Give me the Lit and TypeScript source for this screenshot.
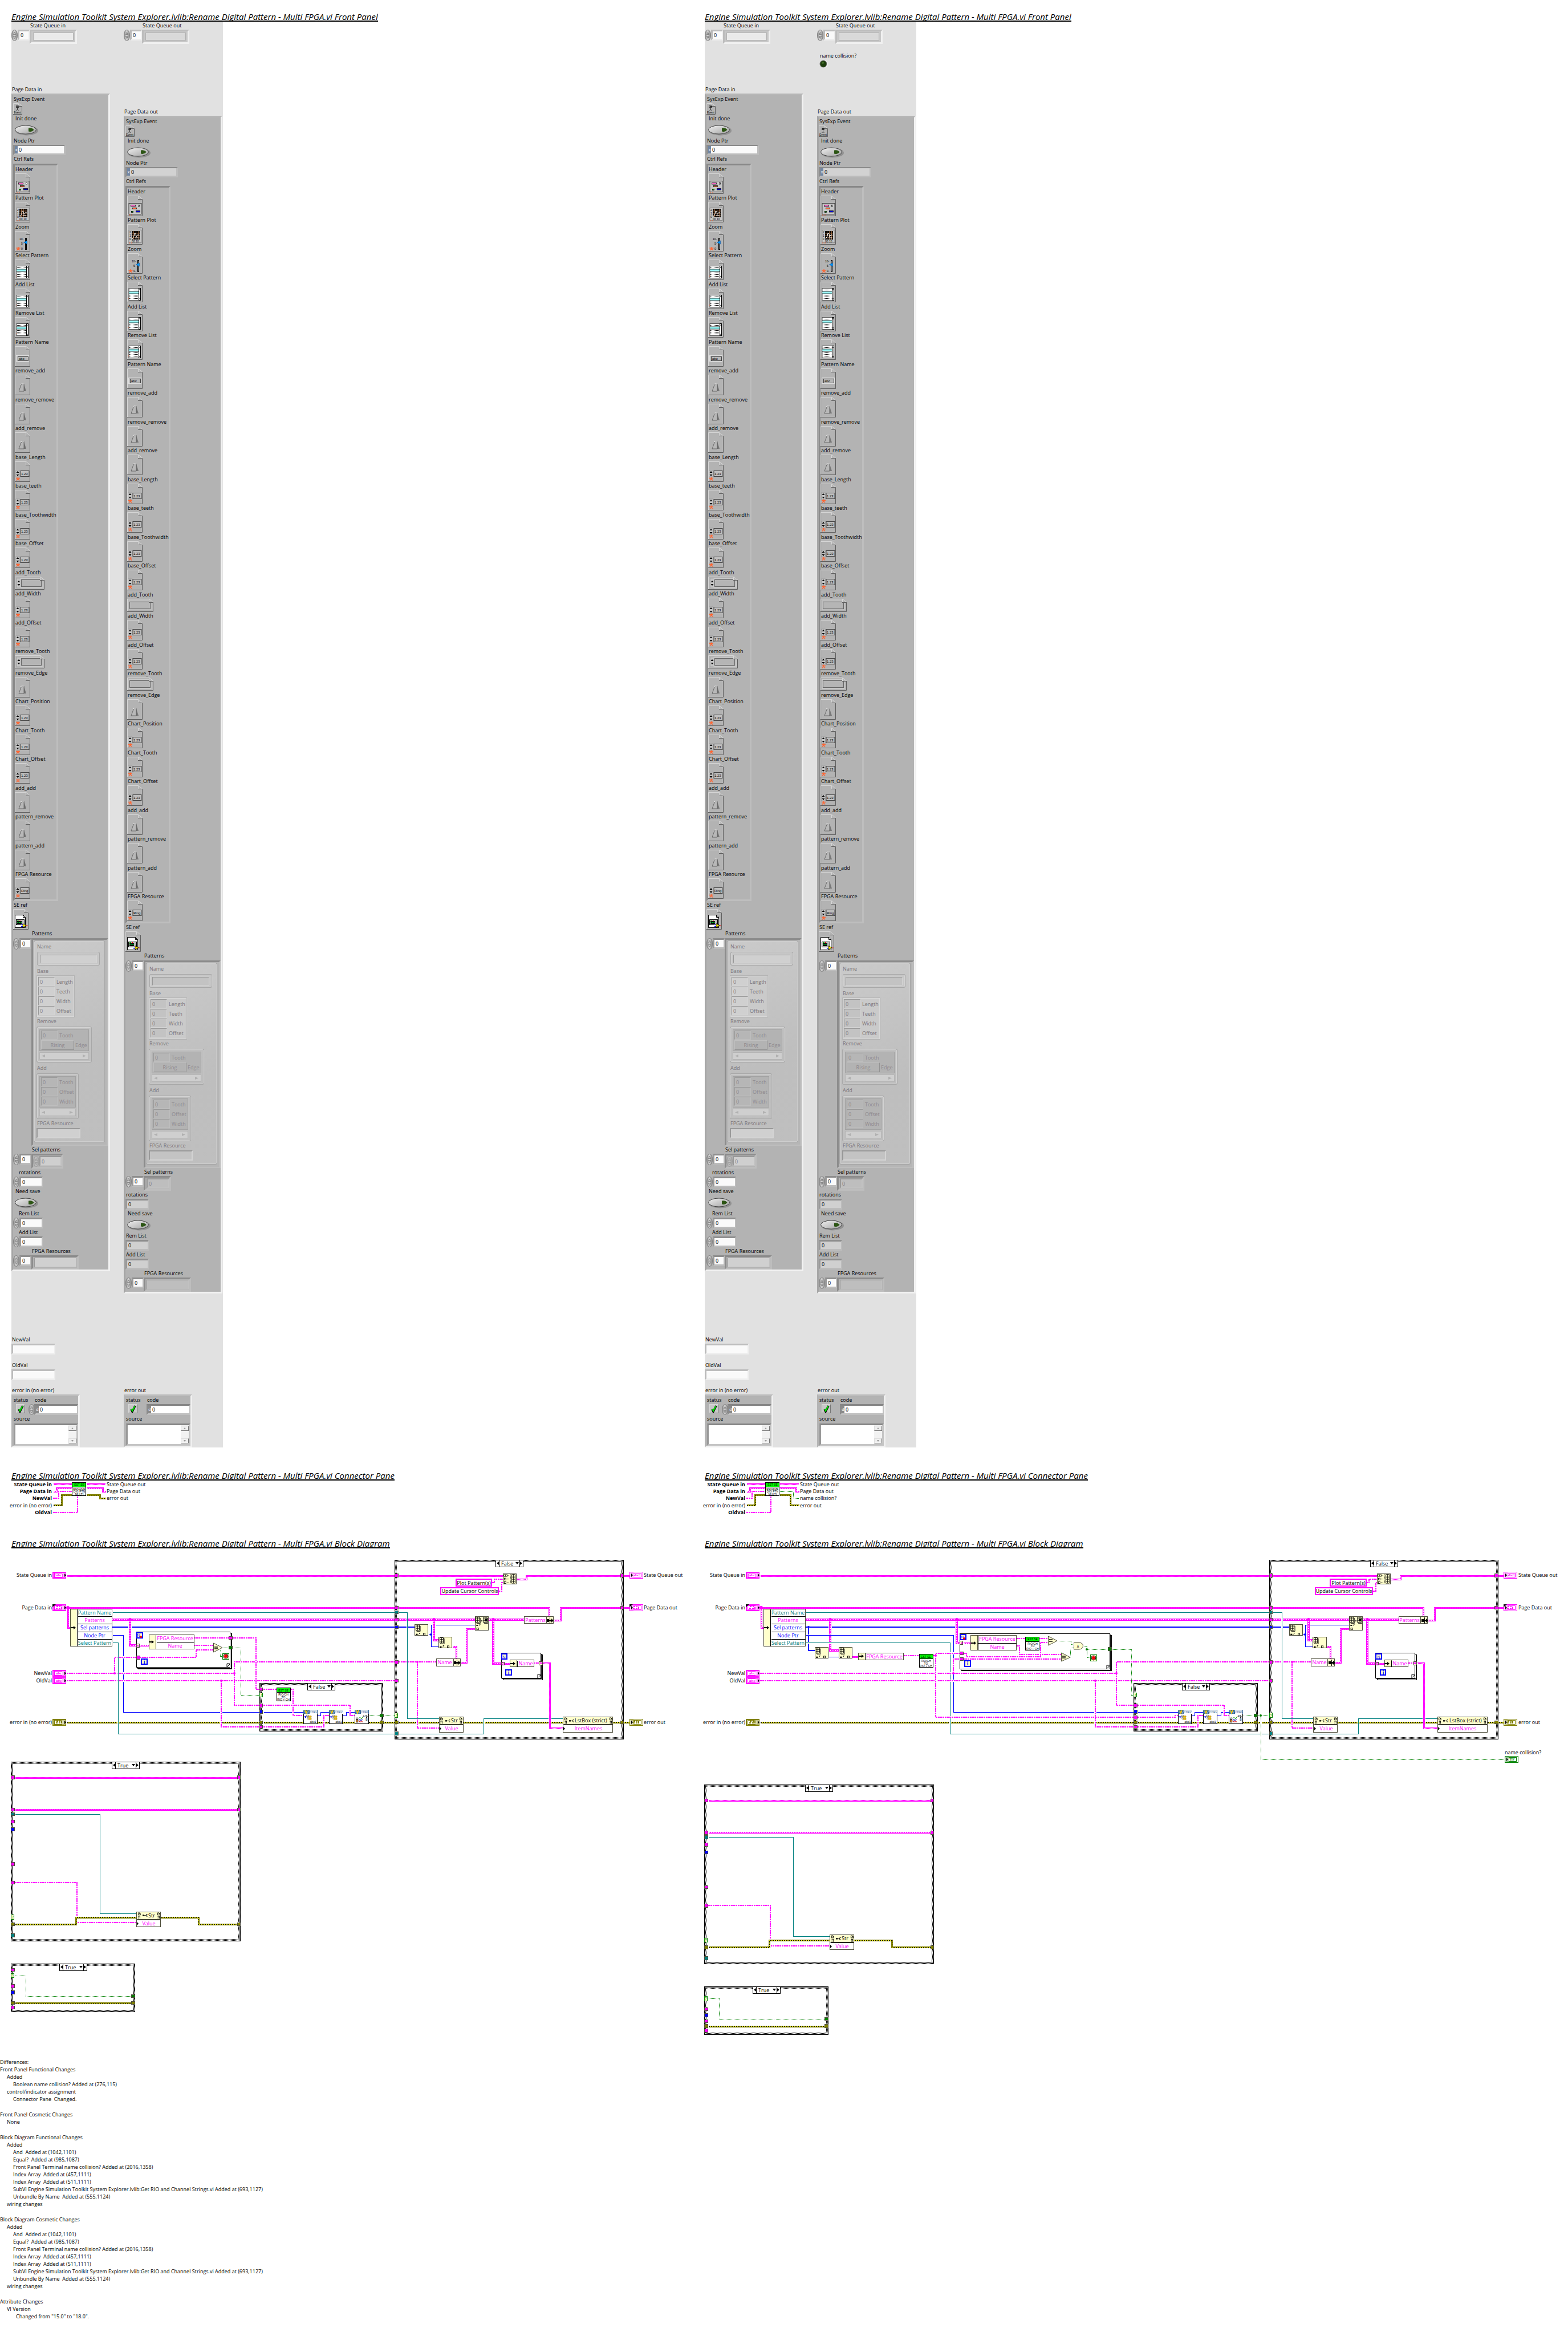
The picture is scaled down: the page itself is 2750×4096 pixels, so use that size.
import { LitElement, html, svg, css, nothing } from "lit";
import { customElement, property } from "lit/decorators.js";

/* ---------- shared drawing helpers ---------- */

// Diagram units are LabVIEW pixels; K brings them to CSS pixels.
const K = 0.776;
const q = (n: number) => Math.round(n * K);

const PINK = "#ff00ff";
const BLUE = "#0000ff";
const TEAL = "#008080";
const OLIVE = "#808000";
const GREEN = "#008000";
const CREAM = "#ffffcc";
const EDGE = "#4d4d3a";

type Kind = "str" | "strArr" | "clu" | "cluArr" | "err" | "blue" | "blueArr" | "teal" | "bool";

const WIRES: Record<Kind, { w: number; c: string; ow?: number; o?: string; d?: string; bd?: string; u?: string }> = {
  str: { w: 2, c: PINK, bd: "3 1" },
  strArr: { w: 3, c: PINK, ow: 1, o: "#ffffff", d: "1 1" },
  clu: { w: 3, c: PINK, ow: 1, o: "#ffffff", d: "2 2" },
  cluArr: { w: 4, c: PINK, ow: 2, o: "#ffffff", d: "1 2" },
  err: { w: 3, c: OLIVE, ow: 1, o: "#000000", d: "2 2", u: "#e8e800" },
  blue: { w: 1, c: BLUE },
  blueArr: { w: 2, c: BLUE },
  teal: { w: 1, c: TEAL },
  bool: { w: 1, c: GREEN, bd: "1 1" },
};

// Points alternate x, y in diagram units.
const wire = (kind: Kind, ...p: number[]) => {
  const s = WIRES[kind];
  const odd = s.w % 2 ? 0.5 : 0;
  let d = "";
  for (let i = 0; i < p.length; i += 2) d += `${i ? "L" : "M"}${q(p[i]) + odd} ${q(p[i + 1]) + odd}`;
  return svg`<g fill="none" shape-rendering="crispEdges">
    <path d=${d} stroke="#fff" stroke-width=${s.w + 2}></path>
    <path d=${d} stroke=${s.c} stroke-width=${s.w} stroke-linejoin="miter" stroke-dasharray=${s.bd ?? "none"}></path>
    ${s.u ? svg`<path d=${d} stroke=${s.u} stroke-width="1"></path>` : nothing}
    ${s.o ? svg`<path d=${d} stroke=${s.o} stroke-width=${s.ow ?? 1} stroke-dasharray=${s.d ?? "none"}></path>` : nothing}
  </g>`;
};

const dot = (x: number, y: number, c = PINK, r = 2) =>
  svg`<circle cx=${q(x)} cy=${q(y)} r=${r} fill=${c}></circle>`;

const box = (x1: number, y1: number, x2: number, y2: number, fill = CREAM, stroke = EDGE, t = 1) => {
  const x = q(x1), y = q(y1), w = q(x2) - x, h = q(y2) - y;
  return svg`<rect x=${x} y=${y} width=${w} height=${h} fill=${stroke}></rect>
    <rect x=${x + t} y=${y + t} width=${w - 2 * t} height=${h - 2 * t} fill=${fill}></rect>`;
};

const line = (x1: number, y1: number, x2: number, y2: number, c = "#000") =>
  svg`<path d=${`M${q(x1) + 0.5} ${q(y1) + 0.5}L${q(x2) + 0.5} ${q(y2) + 0.5}`} stroke=${c} shape-rendering="crispEdges"></path>`;

// y is the middle of the line of text.
const text = (x: number, y: number, s: string, fill = "#000", anchor = "start", cls = "t9") =>
  svg`<text class=${cls} x=${q(x)} y=${q(y) + (cls === "t5" ? 2 : 3)} fill=${fill} text-anchor=${anchor}>${s}</text>`;

const tunnel = (x: number, y: number, c: string) => box(x, y - 4.2, x + 8.4, y + 4.2, c, EDGE);
const autoTunnel = (x: number, y: number) => svg`${box(x, y - 4.2, x + 8, y + 4.2, CREAM, EDGE)}
  ${box(x + 2, y - 2, x + 6, y + 2, CREAM, PINK)}`;
const askTunnel = (x: number, y: number) => svg`${box(x, y - 5.5, x + 7.5, y + 5.5, CREAM, GREEN)}
  ${text(x + 4, y, "?", GREEN, "middle", "t7")}`;

const art = (x: number, y: number, body: unknown) =>
  svg`<g transform=${`translate(${q(x)} ${q(y)}) scale(${K})`}>${body}</g>`;

const caseFrame = (x1: number, y1: number, x2: number, y2: number, sel: number, name: string) => {
  const x = q(x1), y = q(y1), w = q(x2) - x, h = q(y2) - y, sx = q(sel), sy = y;
  return svg`<rect x=${x} y=${y} width=${w} height=${h} fill="#000"></rect>
    <rect x=${x + 1} y=${y + 1} width=${w - 2} height=${h - 2} fill="url(#hatch)"></rect>
    <rect x=${x + 4} y=${y + 4} width=${w - 8} height=${h - 8} fill="#fff"></rect>
    <rect x=${sx} y=${sy} width="49" height="13" fill="#000"></rect>
    <rect x=${sx + 1} y=${sy + 1} width="5" height="11" fill="#fff"></rect>
    <rect x=${sx + 7} y=${sy + 1} width="35" height="11" fill="#fff"></rect>
    <rect x=${sx + 43} y=${sy + 1} width="5" height="11" fill="#fff"></rect>
    <path d=${`M${sx + 6} ${sy + 3}v6l-4 -3zM${sx + 43} ${sy + 3}v6l4 -3zM${sx + 35} ${sy + 4}h6l-3 4z`} fill="#000"></path>
    <text class="t9" x=${sx + 10} y=${sy + 10}>${name}</text>`;
};

const forLoop = (x1: number, y1: number, x2: number, y2: number, ix: number, iy: number, stop = false) => {
  const corner = `M${q(x2) - 6} ${q(y2) - 1}v-6h6zM${q(x2) - 6} ${q(y2) - 1}l6 -6`;
  return svg`${box(x1 + 4, y1 + 4, x2 + 4, y2 + 4, "#fff", "#000")}${box(x1 + 2, y1 + 2, x2 + 2, y2 + 2, "#fff", "#000")}
    ${box(x1, y1, x2, y2, "#fff", "#000")}
    <path d=${corner} fill="#fff" stroke="#000" stroke-width="1"></path>
    ${box(x1, y1 + 1, x1 + 15, y1 + 15, CREAM, BLUE, 2)}
    ${text(x1 + (stop ? 5.5 : 7.5), y1 + 8, "N", BLUE, "middle", "t7")}
    ${stop ? svg`<circle cx=${q(x1 + 10.5)} cy=${q(y1 + 11)} r="2" fill="red"></circle>` : nothing}
    ${box(ix, iy, ix + 15, iy + 14.5, CREAM, BLUE, 2)}
    ${text(ix + 7.5, iy + 7.5, "i", BLUE, "middle", "t9 b")}`;
};

const arrow = (x: number, y: number) =>
  svg`<path d=${`M${q(x)} ${q(y) - 1}h5v-2l4 3l-4 3v-2h-5z`} fill="#000"></path>`;

const unbundle = (x1: number, y1: number, x2: number, rows: [string, string][]) => {
  const y2 = y1 + rows.length * 17.1;
  return svg`${box(x1, y1, x2, y2, "#fff")}
    ${box(x1, y1, x1 + 17, y2)}
    ${rows.map(([n, c], i) => svg`${i ? line(x1 + 17, y1 + i * 17.1, x2 - 1.5, y1 + i * 17.1) : nothing}
      ${text((x1 + 16 + x2) / 2, y1 + i * 17.1 + 9, n, c, "middle")}`)}
    ${line(x1 + 16, y1 + 1, x1 + 16, y2 - 2)}
    ${arrow(x1 + 1, (y1 + y2) / 2)}`;
};

const bundle = (x1: number, y1: number, x2: number, name: string) => svg`${box(x1, y1, x2, y1 + 17, "#fff")}
  ${box(x2 - 17, y1, x2, y1 + 17)}
  ${text((x1 + x2 - 16) / 2, y1 + 9, name, PINK, "middle")}
  ${line(x2 - 8.5, y1 + 1, x2 - 8.5, y1 + 15)}
  <path d=${`M${q(x2 - 15)} ${q(y1 + 9) - 2}h4v1h4v-2l4 3.5l-4 3.5v-2h-4v1h-4z`} fill="#000"></path>`;

const GRID = "M0 0H8V12H0ZM4 0V12M0 4H8M0 8H8M8 2h2v12h-8v-2";

const indexArray = (x: number, y: number) => svg`${box(x, y, x + 31, y + 26.4)}
  ${art(x, y, svg`<g fill="none" stroke="#000" stroke-width="1.1"><path transform="translate(3 2)" d=${GRID}></path>
    <path d="M3 23h4" stroke-width="3"></path><path d="M9 23h1M11 22v-2M10 20h3" ></path>
    <rect x="20" y="20.5" width="4" height="4"></rect></g>`)}`;

const replaceArray = (x: number, y: number) => svg`${box(x, y, x + 31, y + 32.4)}
  ${art(x, y, svg`<g fill="none" stroke="#000" stroke-width="1.1"><path transform="translate(2 2)" d=${GRID}></path>
    <path transform="translate(19 2)" d=${GRID}></path><path d="M23 6h4v4h-4z" fill="#000"></path>
    <path d="M14 10.5h3M3 21h4" stroke-width="2"></path><path d="M9 21h1M11 20v-2h2"></path>
    <rect x="4" y="26.5" width="4" height="4"></rect></g>`)}`;

const buildArray = (x: number, y: number) => svg`${box(x, y, x + 31, y + 24.4)}
  ${art(x, y, svg`<g fill="none" stroke="#000" stroke-width="1.1"><path d="M2 2.5h8v4h-8zM6 2.5v4"></path>
    <rect x="3" y="10.5" width="4" height="4"></rect><rect x="3" y="18.5" width="4" height="4"></rect>
    <path d="M11 4.500h3M9 12.500h5M9 20.500h5" stroke-dasharray="1 1"></path>
    <path d="M17.500 2v21" stroke-dasharray="2 1"></path>
    <path d="M20 2h8v20h-8zM24 2v20M20 6h8M20 10h8M20 14h8M20 18h8"></path></g>`)}`;

const subVi = (x: number, y: number, lines: string[]) => svg`${box(x, y, x + 32, y + 31.6, "#fff", "#000")}
  ${box(x, y, x + 32, y + 11.6, "#00ff00", "#000")}
  ${text(x + 16, y + 6, "EST SE", "#000", "middle", "t5")}
  ${lines.map((l, i) => text(x + 16, y + 15.5 + i * 6, l, "#000", "middle", "t5"))}`;

const cdev = (x: number, y: number, compare = false) => svg`${box(x, y, x + 32, y + 31.4, "#fff", "#000")}
  ${box(x, y, x + 32, y + 9, "#336699", "#336699")}
  ${box(x + 14, y + 1, x + 31, y + 8, "#fff", "#fff")}
  ${text(x + 23, y + 4.500, "CDEV", "#336699", "middle", "t5")}
  ${art(x, y, svg`<path d="M1 1l4 7l3-5l2 5l3-7" stroke="#7fa6cc" fill="none" stroke-width="1.5"></path>
    <path d="M4 1l2.500 7l2.500-7" stroke="#ffcc00" fill="none" stroke-width="2"></path>
    ${compare
      ? svg`<g fill="none" stroke-width="1.200"><circle cx="5.500" cy="20" r="2" stroke="#000"></circle><path d="M3.500 22h4v6h-4z" fill="#ff9933" stroke="#000"></path>
        <path d="M10 19q2-4 4 0t4-3" stroke="#009900"></path><path d="M10 25v-3h3v3h3v-3h2" stroke="#0000cc"></path><path d="M10 28l2-3l2 3l2-3l2 3" stroke="#dd0000"></path>
        <path d="M24 13h3v4m-2-2l2 3l2-3" stroke="#000"></path></g>`
      : svg`<g fill="none" stroke="#666"><path d="M1 16h5M4 14l2 2l-2 2" stroke="#0000ff" stroke-width="1.500"></path>
        <path d="M7 12h5v3h-5zM9 15v6h3M9 17h3"></path><path d="M12 14h6v3h-6zM12 19h6v3h-6z" fill="#ffcc00" stroke="#aa8800"></path></g>`}`)}
  ${compare
    ? svg`${text(x + 21, y + 14, "A", "#000", "middle", "t5")}${text(x + 27, y + 21, "B", "#000", "middle", "t5")}`
    : text(x + 22, y + 26.500, "abc1", "#000", "middle", "t5")}`;

const equal = (x: number, y: number) => svg`
  <path d=${`M${q(x) + 0.5} ${q(y)}L${q(x + 20)} ${q(y + 10.2)}L${q(x) + 0.5} ${q(y + 20.4)}Z`} fill=${CREAM} stroke=${EDGE}></path>
  <path d=${`M${q(x + 2)} ${q(y + 8.500)}h6M${q(x + 2)} ${q(y + 12)}h6`} stroke=${EDGE} stroke-width="2" shape-rendering="crispEdges"></path>`;

const andGate = (x: number, y: number) => svg`
  <path d=${`M${q(x) + 0.5} ${q(y)}h9a7 6 0 0 1 0 12h-9z`} fill=${CREAM} stroke=${EDGE}></path>
  ${text(x + 10, y + 8, "∧", "#000", "middle", "t7")}`;

const stopSign = (x: number, y: number) => svg`${box(x, y, x + 15.500, y + 15, CREAM, GREEN)}
  <circle cx=${q(x + 7.700)} cy=${q(y + 7.500)} r="4" fill="#fff" stroke="#000"></circle>
  <circle cx=${q(x + 7.700)} cy=${q(y + 7.500)} r="3" fill="red"></circle>`;

const property_ = (x: number, y: number, x2: number, name: string, item: string) => svg`${box(x, y, x2, y + 35.300, "#fff")}
  ${box(x, y, x2, y + 18.500)}
  ${line(x + 1.500, y + 18, x2 - 2, y + 18)}
  ${[x + 3, x2 - 8].map((px) => art(px, y, svg`<path d="M0.500 2.500h3l2 2v3h-5zM3.500 2.500v2h2" fill="none" stroke="#000" stroke-width="1.100"></path>
    <path d="M0.500 10.500h2v2h-1v1M1.500 15v1.500M4.500 10v4M4.500 15v1.500" fill="none" stroke="#000" stroke-width="1.200"></path>`))}
  ${art(x + 13.500, y + 6, svg`<path d="M0 1.500h4v1h4v-1.500l2-1h1v1.500h-2v3h2v1.500h-1l-2-1v-1.500h-4v1h-4z" fill="#000"></path>`)}
  ${text(x + 27, y + 9, name)}
  <path d=${`M${q(x + 1.500)} ${q(y + 23)}v6l3-3z`} fill="#000"></path>
  ${text((x + x2) / 2 + 1, y + 27, item, PINK, "middle")}`;

const terminal = (x: number, y: number, c: string, glyph: string, out = false, typedef = false) => {
  const X = q(x), Y = q(y), t = out ? 1 : 2;
  const soft = c === PINK ? "#ffb3ff" : c === OLIVE ? "#cfcf9f" : "#a8d0a8";
  return svg`<rect x=${X} y=${Y} width="24" height="12" fill=${c}></rect>
    <rect x=${X + t} y=${Y + t} width=${24 - 2 * t} height=${12 - 2 * t} fill="#fff"></rect>
    <rect x=${X + 3.500} y=${Y + 2.500} width="17" height="7" fill="none" stroke=${c}></rect>
    <rect x=${out ? X + 1 : X + 17} y=${Y + t} width="6" height=${12 - 2 * t} fill=${soft} opacity="0.8"></rect>
    ${glyph
      ? svg`<text class="t7 m" x=${X + (out ? 13 : 11)} y=${Y + 8} fill=${c} text-anchor="middle">${glyph}</text>`
      : svg`<path d=${`M${X + 7} ${Y + 4}h3M${X + 6} ${Y + 7}h3M${X + 11} ${Y + 7}h3M${X + 12} ${Y + 4}h2M${X + 16} ${Y + 4}v4`} stroke=${c} stroke-width="2" fill="none"></path>`}
    <path d=${out ? `M${X + 3} ${Y + 3}v6l3 -3z` : `M${X + 21} ${Y + 3}v6l3 -3z`} fill="#000"></path>
    ${typedef ? svg`<path d=${`M${X} ${Y}h6l-6 5z`} fill="#000"></path>` : nothing}`;
};

const svgText = css`
  :host { display: block; font-family: "Open Sans", "Noto Sans", sans-serif; }
  svg { display: block; overflow: visible; }
  .t9 { font-size: 9px; }
  .t7 { font-size: 7px; }
  .t5 { font-size: 5px; font-family: "Liberation Sans", sans-serif; }
  .b { font-weight: 700; }
  .m { font-family: "Liberation Serif", serif; font-weight: 700; }
`;

/* ---------- front panel ---------- */

const paper = (w: number, h: number, body: unknown, fold = 7) => html`<svg class="paper" width=${w} height=${h} viewBox=${`0 0 ${w} ${h}`} aria-hidden="true">
  <path d=${`M0.500 ${h}V0.500H${w - fold - 0.500}V${fold - 1}M${w - fold} 0.500L${w - 0.500} ${fold - 1}`} fill="none" stroke="#d6d6d6"></path>
  <path d=${`M0 ${h - 0.500}H${w - 0.500}V${fold - 0.500}H${w - fold - 1}`} fill="none" stroke="#5e5e5e"></path>
  ${body}</svg>`;

const star = (x: number, y: number) =>
  svg`<path d=${`M${x} ${y - 3}v3M${x - 3.500} ${y - 1}h7M${x} ${y}l-2.500 3M${x} ${y}l2.500 3`} stroke="#ff6633" stroke-width="1.300" fill="none"></path>`;

const spinArrows = (x: number, y: number, h: number) => svg`
  <rect x=${x} y=${y} width="7" height=${h} fill="#c4c4c4" stroke="#8a8a8a" stroke-width="0.500"></rect>
  <path d=${`M${x + 1} ${y + h / 2 - 1.500}h5l-2.500 -3zM${x + 1} ${y + h / 2 + 1.500}h5l-2.500 3z`} fill="#000"></path>`;

const glyphs: Record<string, () => unknown> = {
  header: () => svg`<rect x="3" y="13.500" width="22" height="19" fill="#c6c6c6" stroke="#444"></rect>
    <g stroke="#000" stroke-width="0.700"><rect x="6.500" y="16.500" width="8" height="2.500" fill="#ff66cc"></rect><rect x="19.500" y="16.500" width="2" height="2.500" fill="#fff"></rect>
    <rect x="9.500" y="21.500" width="7" height="2" fill="#ff6633"></rect><rect x="7.500" y="27.500" width="3" height="2" fill="#00aa00"></rect><rect x="15.500" y="26.500" width="7" height="2.500" fill="#0000dd"></rect></g>
    <path d="M3 34h2M7 34h2" stroke="#ff6633"></path>`,
  plot: () => svg`<rect x="3" y="10.500" width="22" height="22" fill="#c6c6c6" stroke="#8a8a8a"></rect>
    <rect x="8" y="12" width="14" height="15" fill="#000"></rect>
    <path d="M11.500 12v15M15.500 12v15M19.500 12v15M8 16h14M8 20h14M8 24h14" stroke="#cc8855" stroke-width="0.700"></path>
    <path d="M9 26l3-5l1-5l2 1l1 5l2-3h3M14 24h6" fill="none" stroke="#fff"></path>
    <g font-size="5"><text x="4" y="16">2</text><text x="4" y="22">1</text><text x="4" y="28">0</text><text x="8" y="32">00 10</text></g>
    <path d="M3 33h2M7 33h2" stroke="#ff6633"></path>`,
  zoom: () => svg`<g font-size="5"><text x="8" y="16">10-</text><text x="11" y="24">5-</text><text x="11" y="33">0-</text></g>
    <rect x="18.500" y="12.500" width="2" height="20" fill="#777" stroke="#000"></rect><path d="M21.500 17v6l-6-3z" fill="#0099ff" stroke="#004499" stroke-width="0.500"></path>${star(6, 31)}`,
  list: () => svg`<rect x="3" y="11.500" width="20" height="21" fill="#fff" stroke="#555"></rect>
    <path d="M4 14.500h16M4 23.500h16M4 26.500h16M4 29.500h16" stroke="#000" stroke-dasharray="1 1"></path>
    <rect x="3.500" y="17" width="17" height="4" fill="#99ffff"></rect><path d="M3 17h17M3 21h17" stroke="#000" stroke-width="0.800"></path>
    <rect x="20.500" y="11.500" width="3" height="21" fill="#fff" stroke="#000"></rect><path d="M20 14h4M20 30h4" stroke="#000"></path><path d="M2 29h1" stroke="#ff6633"></path>`,
  abc: () => svg`<rect x="2.500" y="16.500" width="22" height="10" fill="#bdbdbd" stroke="#e0e0e0"></rect><rect x="5.500" y="18.500" width="18" height="7" fill="#b8b8b8" stroke="#444"></rect>
    <text x="7" y="24" font-size="6">abc</text>`,
  knob: () => svg`<path d="M16 16.500l4 12.500h-5z" fill="#777"></path><path d="M7 29l4-11q1-2 5-2v13z" fill="#b8b8b8" stroke="#555" stroke-width="0.800"></path><path d="M10 17q1-1.500 6-1" stroke="#e8e8e8" fill="none"></path>`,
  num: () => svg`${spinArrows(1.5, 16, 11)}<rect x="10" y="16.500" width="15" height="10" fill="#bdbdbd" stroke="#444"></rect><text x="11" y="24" font-size="6">1.23</text>${star(5.5, 30.5)}`,
  ring: () => svg`${spinArrows(1.5, 16, 11)}<rect x="10" y="16.500" width="15" height="10" fill="#bdbdbd" stroke="#444"></rect><text x="11" y="24" font-size="6">Ring</text>${star(5.5, 30.5)}`,
  se: () => svg`<path d="M3.500 10.500h14l4 4v18h-18z" fill="#fff" stroke="#000"></path><path d="M17.500 10.500v4h4" fill="none" stroke="#000"></path>
    <rect x="5.500" y="18.500" width="14" height="9" fill="#bbb" stroke="#000"></rect><rect x="7" y="21" width="8" height="5" fill="#000"></rect>
    <path d="M7 24l2-1.500l2 1.500l2-1.500l2 1.500" stroke="#00cc33" fill="none"></path><path d="M7 19.500h3" stroke="#00aa00"></path><path d="M11 19.500h2" stroke="red"></path>
    <path d="M14 27.500h3M14 30.500h3" stroke="#00f"></path><path d="M17 25.500v6.500l6-3.200z" fill="#ffee00" stroke="#000" stroke-width="0.700"></path><path d="M23 29h2.500" stroke="red"></path>`,
};

const REFS: [string, string][] = [
  ["Header", "header"], ["Pattern Plot", "plot"], ["Zoom", "zoom"], ["Select Pattern", "list"],
  ["Add List", "list"], ["Remove List", "list"], ["Pattern Name", "abc"], ["remove_add", "knob"],
  ["remove_remove", "knob"], ["add_remove", "knob"], ["base_Length", "num"], ["base_teeth", "num"],
  ["base_Toothwidth", "num"], ["base_Offset", "num"], ["add_Tooth", "wide"], ["add_Width", "num"],
  ["add_Offset", "num"], ["remove_Tooth", "wide"], ["remove_Edge", "knob"], ["Chart_Position", "num"],
  ["Chart_Tooth", "num"], ["Chart_Offset", "num"], ["add_add", "knob"], ["pattern_remove", "knob"],
  ["pattern_add", "knob"], ["FPGA Resource", "ring"],
];

@customElement("vi-front-panel")
export class ViFrontPanel extends LitElement {
  @property({ type: Boolean }) collision = false;

  static styles = css`
    :host { display: block; font: 9px/14px "Open Sans", "Noto Sans", sans-serif; color: #000; }
    .panel { display: grid; grid-template-columns: 197px 174px; width: max-content; background: #e1e1e1; }
    .col { display: flex; flex-direction: column; align-items: flex-start; }
    label, .cap { display: block; padding-left: 1px; white-space: nowrap; line-height: 14px; }
    svg { display: block; }
    svg text { font-family: "Liberation Sans", sans-serif; fill: #000; }
    input, button, textarea { font: inherit; margin: 0; box-sizing: border-box; border-radius: 0; min-width: 0; }
    button { padding: 0; border: 0; background: none; display: block; }
    .row { display: flex; align-items: flex-start; }
    .field { border: 2px solid; border-width: 3px 2px 3px 3px; border-color: #8e8e8e #bcbcbc #bcbcbc #999; background: #fafafa; color: #000; padding: 0 0 0 2px; height: 19px; width: 41px; line-height: 12px; }
    .top .field, .strings .field { border-color: #bdbdbd #eee #eee #bbb; }
    .field.ind { background: #d0d0d0; }
    .field.idx { width: 21px; }
    .spin { width: 11px; height: 20px; flex: none; box-sizing: border-box; border: 1px solid #858585; border-radius: 6px / 10px; background: linear-gradient(90deg, #8c8c8c, #d8d8d8 45%, #8a8a8a); display: flex; flex-direction: column; align-items: center; justify-content: center; }
    .spin button { height: 8px; width: 11px; }
    .spin.off { opacity: 0.45; }
    .spin.low { height: 19px; }
    .array { border: 3px solid; border-color: #8c8c8c #bdbdbd #bdbdbd #8c8c8c; background: #b3b3b3; box-sizing: border-box; }
    .top .array { border-color: #bdbdbd #f0f0f0 #f0f0f0 #bdbdbd; background: #c8c8c8; width: 83px; height: 25px; padding: 2px 3px 3px; }
    .top .array .field { width: 100%; height: 100%; border: 1px solid #b0b0b0; background: #eaeaea; display: block; }
    .top .array .field.ind { background: #d9d9d9; }
    .data { margin-top: 73px; }
    .data.out { margin-top: 112px; }
    .data.late { margin-top: 70px; }
    .led { margin: 14px 0 0 4px; }
    .cluster { box-sizing: border-box; width: 173px; border: 3px solid; border-color: #b6b6b6 #f2f2f2 #f2f2f2 #a6a6a6; background: #b3b3b3; display: flex; flex-direction: column; align-items: flex-start; }
    .in1 { margin-left: 3px; }
    .in2 { margin-left: 9px; }
    .in3 { margin-left: 32px; }
    .bool { margin: 3px 0 2px 3px; }
    .ptr { display: flex; width: 92px; height: 18px; box-sizing: border-box; border: 2px solid; border-width: 2px 3px 3px 3px; border-color: #8a8a8a #bcbcbc #bcbcbc #8e8e8e; }
    .ptr i, .code i { font-style: normal; color: #fff; width: 5px; background: #7186a3; line-height: 13px; font-size: 7px; text-align: center; }
    .ptr input, .code input { flex: 1; border: 0; background: #fafafa; padding: 0 0 0 2px; height: 13px; line-height: 13px; }
    .ptr.ind input { background: #d2d2d2; }
    .refs { box-sizing: border-box; width: 79px; margin-top: 1px; border: 3px solid; border-color: #888 #bebebe #bebebe #8a8a8a; }
    .ref:nth-child(even) { padding-bottom: 1px; }
    .patterns { margin-top: 1px; }
    .patterns .array { width: 135px; padding: 1px 3px 4px 1px; background: #b6b6b6; border-bottom-width: 2px; }
    .elem { box-sizing: border-box; border: 2px solid #a6a6a6; outline: 1px solid #cfcfcf; outline-offset: -2px; border-radius: 3px; background: linear-gradient(160deg, #cacaca, #bebebe 60%, #bfbfbf); padding: 2px 3px 5px; display: flex; flex-direction: column; align-items: flex-start; color: #7c777c; }
    .elem input { background: #d0d0d0; border: 1px solid; border-color: #999 #d4d4d4 #d4d4d4 #999; color: #858085; }
    .elem.ind input { background: #c3c3c3; }
    .plate { box-sizing: border-box; border: 2px solid #a8a8a8; outline: 1px solid #d2d2d2; outline-offset: -2px; border-radius: 3px; padding: 3px; }
    .name { width: 110px; height: 24px; margin: 2px 0 3px 1px; }
    .name input { width: 100px; height: 15px; display: block; margin: 0; }
    .base { border: 1px solid #b4b4b4; outline: 1px solid #d8d8d8; outline-offset: -2px; background: #cacaca; padding: 2px; width: 67px; box-sizing: border-box; }
    .pair { display: grid; grid-template-columns: 29px auto; column-gap: 2px; height: 17px; align-items: start; justify-content: start; }
    .pair input { width: 29px; height: 16px; padding: 0 0 0 2px; line-height: 12px; }
    .pair label { line-height: 18px; }
    .remove { width: 97px; margin: 2px 0 3px; }
    .add { width: 74px; margin: 2px 0 1px; }
    .group { background: #b3b3b3; border: 1px solid #a2a2a2; box-sizing: border-box; padding: 1px 2px; color: #8f8a8f; }
    .elem .group input { background: #b6b6b6; border-color: #999 #bebebe #bebebe #999; color: #8f8a8f; }
    .edge { display: flex; align-items: center; height: 17px; gap: 1px; }
    .edge button { width: 58px; height: 17px; color: #8d888d; border: 1px solid; border-color: #c0c0c0 #939393 #939393 #c0c0c0; line-height: 14px; }
    .hbar { display: flex; justify-content: space-between; align-items: center; height: 13px; margin-top: 2px; box-sizing: border-box; border: 1px solid #b4b4b4; background: #cfcfcf; padding: 0 3px; }
    .elem .fpga { width: 77px; height: 18px; margin-top: 1px; border-width: 2px; }
    .sel .array { width: 56px; height: 26px; padding: 1px 0 0; display: flex; }
    .sel .array.ind { width: 48px; padding-left: 2px; }
    .sel .array .field { height: 18px; width: 40px; border-color: #999 #c2c2c2 #c2c2c2 #999; border-width: 2px; background: #cfcfcf; color: #858085; }
    .sel .array.ind .field { background: #bebebe; }
    .res .array { width: 83px; height: 25px; padding: 1px 2px; }
    .res .array .field { width: 74px; height: 17px; border-color: #999 #c2c2c2 #c2c2c2 #999; border-width: 1px; background: #d0d0d0; display: block; }
    .res .array .field.ind { background: #bebebe; }
    .strings { margin-top: 113px; display: flex; flex-direction: column; }
    .strings .field { width: 77px; }
    .strings .gap { margin-top: 12px; }
    .err { margin-top: 11px; }
    .col.right .err { margin-top: auto; }
    .ecl { width: 120px; height: 93px; border-color: #bdbdbd #f0f0f0 #f0f0f0 #b4b4b4; }
    .egrid { display: grid; grid-template-columns: 27px 10px 77px; row-gap: 0; }
    .egrid .code { grid-column: 3; }
    .egrid .span { grid-column: 2 / 4; padding-left: 11px; }
    .tick { margin: 0 0 0 5px; width: 16px; height: 16px; border: 1px solid; border-color: #d8d8d8 #777 #777 #d8d8d8; background: #c8c8c8; }
    .code { display: flex; height: 19px; box-sizing: border-box; border: 3px solid; border-width: 3px 2px 3px 3px; border-color: #858585 #c0c0c0 #c0c0c0 #8a8a8a; }
    .code i { background: #8a8a8a; }
    .code input { background: #fff; }
    .src { display: flex; margin: 1px 0 0 1px; width: 113px; height: 39px; box-sizing: border-box; border: 3px solid; border-color: #858585 #c4c4c4 #c4c4c4 #999; background: #fff; }
    .src textarea { flex: 1; border: 0; resize: none; background: #fff; padding: 0; overflow: hidden; height: 33px; }
    .vbar { width: 14px; background: #f2f2f2; display: flex; flex-direction: column; justify-content: space-between; padding: 1px 0; }
    .vbar button { width: 14px; height: 9px; background: #efefef; border: 1px solid; border-color: #ddd #777 #777 #ddd; display: flex; align-items: center; justify-content: center; }
  `;

  private spinner(off = false, low = false) {
    return html`<span class="spin ${off ? "off" : ""} ${low ? "low" : ""}">
      <button aria-label="Increment" ?disabled=${off}><svg width="11" height="8"><path d="M3.500 6.500h4l-2-4z" fill="#c8c8c8" stroke="#666" stroke-width="0.700"></path></svg></button>
      <button aria-label="Decrement" ?disabled=${off}><svg width="11" height="8"><path d="M3.500 1.500h4l-2 4z" fill="#c8c8c8" stroke="#666" stroke-width="0.700"></path></svg></button>
    </span>`;
  }

  private index(name: string) {
    return html`${this.spinner()}<input class="field idx" aria-label="${name} index" value="0" />`;
  }

  private toggle(id: string) {
    return html`<button class="bool" id=${id} aria-pressed="false"><svg width="42" height="20" viewBox="0 0 42 20">
      <defs><linearGradient id="face" x1="0" y1="0" x2="1" y2="1"><stop offset="0" stop-color="#f0f0f0"></stop><stop offset="1" stop-color="#a2a2a2"></stop></linearGradient></defs>
      <ellipse cx="21" cy="11" rx="20" ry="8.500" fill="#858585" opacity="0.7"></ellipse>
      <ellipse cx="19" cy="9.500" rx="18.500" ry="7.500" fill="url(#face)" stroke="#444"></ellipse>
      <path d="M24 6.500q6-1.500 9.500 3q-3.500 4.500-9.500 3z" fill="#2c5514"></path></svg></button>`;
  }

  private refIcon(kind: string, out: boolean) {
    if (kind !== "wide") return paper(27, 36, glyphs[kind]());
    const w = out ? 46 : 52;
    const x = out ? 3 : 10;
    return paper(w, 23, svg`
      ${out ? nothing : svg`<rect x="3.500" y="3" width="46" height="17" fill="none" stroke="#ccc"></rect>${spinArrows(3.5, 3, 17)}`}
      <rect x=${x} y="3.500" width=${w - x - 4} height="16" fill="none" stroke="#ccc"></rect>
      <rect x=${x + 1.5} y="5.500" width=${w - x - 7} height="12" fill="#b5b5b5" stroke="#666"></rect>
      <rect x=${w - 7} y="1" width="6" height="5" fill="#b3b3b3"></rect>
      <path d=${`M${w - 7.5} 1V6M${w - 7} 0.500L${w - 0.5} 6`} stroke="#d6d6d6" fill="none"></path>
      <path d=${`M${w - 8} 6.500H${w}`} stroke="#5e5e5e" fill="none"></path>`);
  }

  private pair(id: string, name: string) {
    return html`<div class="pair"><input id=${id} value="0" disabled /><label for=${id}>${name}</label></div>`;
  }

  private hbar() {
    return html`<div class="hbar"><svg width="7" height="5"><path d="M6 0v5l-6-2.500z" fill="#b0b0b0"></path></svg><svg width="7" height="5"><path d="M0 0v5l6-2.500z" fill="#b0b0b0"></path></svg></div>`;
  }

  private pageData(dir: "in" | "out") {
    const out = dir === "out";
    const ind = out ? "ind" : "";
    const id = (s: string) => `${dir}-${s}`;
    const numeric = (slug: string, name: string) => html`
      <label class=${out ? "" : "in2"} for=${id(slug)}>${name}</label>
      <div class="row">${out ? nothing : this.spinner(false, true)}<input class="field ${ind}" id=${id(slug)} value="0" ?readonly=${out} /></div>`;
    return html`
      <div class="cap">Page Data ${dir}</div>
      <div class="cluster">
        <div class="cap">SysExp Event</div>
        ${paper(16, 20, svg`<circle cx="7.500" cy="6" r="1.500" fill="none" stroke="#000"></circle><path d="M5 4l5 4M10 4l-5 4M7.500 8v3l-2 2M7.500 11l2 2" stroke="#000" stroke-width="0.700" fill="none"></path><text x="1" y="18" font-size="5">Event</text>`, 6)}
        <label class="in1" for=${id("init")}>Init done</label>
        ${this.toggle(id("init"))}
        <label for=${id("ptr")}>Node Ptr</label>
        <div class="ptr ${ind}"><i>x</i><input id=${id("ptr")} value="0" ?readonly=${out} /></div>
        <div class="cap">Ctrl Refs</div>
        <div class="refs">
          ${REFS.map(([name, kind]) => html`<div class="ref"><div class="cap">${name}</div>${this.refIcon(kind, out)}</div>`)}
        </div>
        <div class="cap">SE ref</div>
        ${paper(27, 36, glyphs.se())}
        <div class="cap in3">Patterns</div>
        <div class="row patterns">${this.index("Patterns")}
          <div class="array"><div class="elem ${ind}">
            <label for=${id("name")}>Name</label>
            <div class="plate name"><input id=${id("name")} disabled /></div>
            <div class="cap">Base</div>
            <div class="base">
              ${["Length", "Teeth", "Width", "Offset"].map((n) => this.pair(id("base-" + n), n))}
            </div>
            <div class="cap">Remove</div>
            <div class="plate remove">
              <div class="group">${this.pair(id("rem-tooth"), "Tooth")}
                <div class="edge"><button id=${id("edge")} disabled>Rising</button><label for=${id("edge")}>Edge</label></div></div>
              ${this.hbar()}
            </div>
            <div class="cap">Add</div>
            <div class="plate add">
              <div class="group">${["Tooth", "Offset", "Width"].map((n) => this.pair(id("add-" + n), n))}</div>
              ${this.hbar()}
            </div>
            <label for=${id("fpga")}>FPGA Resource</label>
            <input class="fpga" id=${id("fpga")} disabled />
          </div></div>
        </div>
        <label class="in3" for=${id("sel")}>Sel patterns</label>
        <div class="row sel">${this.index("Sel patterns")}
          <div class="array ${ind}">${out ? nothing : this.spinner(true, true)}<input class="field" id=${id("sel")} value="0" disabled /></div>
        </div>
        ${numeric("rot", "rotations")}
        <label class="in1" for=${id("save")}>Need save</label>
        ${this.toggle(id("save"))}
        ${numeric("reml", "Rem List")}
        ${numeric("addl", "Add List")}
        <label class="in3" for=${id("res")}>FPGA Resources</label>
        <div class="row res">${this.index("FPGA Resources")}
          <div class="array"><input class="field ${ind}" id=${id("res")} disabled /></div>
        </div>
      </div>`;
  }

  private queue(dir: string) {
    return html`<div class="top">
      <label class="in3" for="queue-${dir}">State Queue ${dir}</label>
      <div class="row">${this.index("State Queue " + dir)}
        <div class="array"><input class="field ${dir === "out" ? "ind" : ""}" id="queue-${dir}" disabled /></div></div></div>`;
  }

  private error(title: string, dir: string) {
    return html`<div class="err"><div class="cap">${title}</div>
      <div class="cluster ecl">
        <div class="egrid">
          <label for="status-${dir}">status</label><label class="span" for="code-${dir}">code</label>
          <button class="tick" id="status-${dir}"><svg width="14" height="14"><path d="M4 8l2 4l5-10" fill="none" stroke="#000" stroke-width="3.500"></path><path d="M4.500 8l1.500 3l4.500-8.500" fill="none" stroke="#00ee00" stroke-width="2"></path></svg></button>
          ${dir === "in" ? this.spinner(false, true) : nothing}
          <div class="code"><i>d</i><input id="code-${dir}" value="0" ?readonly=${dir === "out"} /></div>
        </div>
        <label for="source-${dir}">source</label>
        <div class="src"><textarea id="source-${dir}" ?readonly=${dir === "out"}></textarea>
          <div class="vbar"><button aria-label="Scroll up"><svg width="4" height="3"><path d="M0 3h4l-2-3z" fill="#999"></path></svg></button><button aria-label="Scroll down"><svg width="4" height="3"><path d="M0 0h4l-2 3z" fill="#999"></path></svg></button></div></div>
      </div></div>`;
  }

  render() {
    return html`<div class="panel">
      <div class="col">
        ${this.queue("in")}
        <div class="data">${this.pageData("in")}</div>
        <div class="strings">
          <label for="newval">NewVal</label><input class="field" id="newval" />
          <label class="gap" for="oldval">OldVal</label><input class="field" id="oldval" />
        </div>
        ${this.error("error in (no error)", "in")}
      </div>
      <div class="col right">
        ${this.queue("out")}
        ${this.collision
          ? html`<div class="led"><div class="cap">name collision?</div>
              <svg width="16" height="14"><circle cx="8" cy="7" r="7" fill="#f4f4f4"></circle><circle cx="7" cy="7" r="6.500" fill="#777"></circle><circle cx="7" cy="7" r="5.500" fill="#1d3d0c"></circle><circle cx="6" cy="5" r="2" fill="#3f6a28"></circle></svg></div>`
          : nothing}
        <div class="data ${this.collision ? "late" : "out"}">${this.pageData("out")}</div>
        ${this.error("error out", "out")}
      </div>
    </div>`;
  }
}

/* ---------- connector pane ---------- */

@customElement("vi-connector-pane")
export class ViConnectorPane extends LitElement {
  @property({ type: Boolean }) collision = false;
  static styles = [svgText, css`:host { height: 101px; }`];

  render() {
    const ey = this.collision ? 56 : 40;
    return html`<svg width="400" height="64" role="img" aria-label="Connector pane">
      ${wire("strArr", 94.5, 8, 137, 8)}
      ${wire("clu", 94, 24, 102, 24, 102, 16.5, 137, 16.5)}
      ${wire("str", 94, 40, 106.6, 40, 106.6, 24, 137, 24)}
      ${wire("err", 94, 56, 113.5, 56, 113.5, 32, 137, 32)}
      ${wire("str", 94, 72, 149, 72, 149, 35)}
      ${wire("strArr", 169, 8, 211, 8)}
      ${wire("clu", 169, 16.5, 206, 16.5, 206, 24, 212, 24)}
      ${this.collision ? wire("bool", 169, 24, 200, 24, 200, 40, 212, 40) : nothing}
      ${wire("err", 169, 32, this.collision ? 193 : 200, 32, this.collision ? 193 : 200, ey, 212, ey)}
      ${subVi(137, 3.4, ["RENAME", "DIG PTN", "MULTI"])}
      ${text(91, 8.7, "State Queue in", "#000", "end", "t9 b")}
      ${text(91, 24.5, "Page Data in", "#000", "end", "t9 b")}
      ${text(91, 40.5, "NewVal", "#000", "end", "t9 b")}
      ${text(91, 56.5, "error in (no error)", "#000", "end")}
      ${text(91, 72.5, "OldVal", "#000", "end", "t9 b")}
      ${text(215, 8.7, "State Queue out")}
      ${text(215, 24.5, "Page Data out")}
      ${this.collision ? text(215, 40.5, "name collision?") : nothing}
      ${text(215, ey + 0.5, "error out")}
    </svg>`;
  }
}

/* ---------- block diagram ---------- */

@customElement("vi-block-diagram")
export class ViBlockDiagram extends LitElement {
  @property({ type: Boolean }) collision = false;
  static styles = [svgText, css`:host { height: 894px; } svg { width: 100%; height: 894px; }`];

  private outerCase(s: number) {
    return svg`
      ${wire("strArr", 875 + s, 61.3, 1111 + s, 61.3)}
      ${wire("strArr", 1141 + s, 69.3, 1163.6 + s, 69.3, 1163.6 + s, 61.3, 1396 + s, 61.3)}
      ${wire("str", 1086 + s, 77, 1092 + s, 77, 1092 + s, 69.3, 1111 + s, 69.3)}
      ${wire("str", 1101 + s, 96.3, 1108 + s, 96.3, 1108 + s, 77, 1111 + s, 77)}
      ${wire("clu", 875 + s, 134.3, 1214.8 + s, 134.3, 1214.8 + s, 154)}
      ${wire("clu", 1225 + s, 162.3, 1240.6 + s, 162.3, 1240.6 + s, 134.3, 1396 + s, 134.3)}
      ${wire("blueArr", 875 + s, 178, 912 + s, 178)}
      ${wire("blue", 942 + s, 193.7, 948.5 + s, 193.7)}
      ${wire("blue", 1047 + s, 173.3, 948.5 + s, 173.3, 948.5 + s, 221.3, 966 + s, 221.3)}
      ${wire("cluArr", 955.3 + s, 161, 955.3 + s, 208, 966 + s, 208)}
      ${wire("cluArr", 1088.9 + s, 161, 1088.9 + s, 260, 1107 + s, 260)}
      ${wire("cluArr", 875 + s, 161, 1159 + s, 161)}
      ${dot(948.5 + s, 194, BLUE)}${dot(955.3 + s, 161, PINK, 3)}${dot(1088.9 + s, 161, PINK, 3)}
      ${wire("clu", 996 + s, 221.3, 1004.7 + s, 221.3, 1004.7 + s, 250)}
      ${wire("clu", 1015 + s, 258.3, 1027.8 + s, 258.3, 1027.8 + s, 182.3, 1048 + s, 182.3)}
      ${wire("str", 875 + s, 257, 961 + s, 257)}
      ${wire("err", 875 + s, 393.3, 1396 + s, 393.3)}
      ${wire("str", 917.7 + s, 257, 917.7 + s, 406, 967 + s, 406)}
      ${dot(917.7 + s, 257)}
      ${wire("teal", 875 + s, 144.3, 894.6 + s, 144.3, 894.6 + s, 384.3, 967 + s, 384.3)}
      ${wire("teal", 875 + s, 418.3, 1067.6 + s, 418.3, 1067.6 + s, 384.3, 1247 + s, 384.3)}
      ${wire("strArr", 1200 + s, 259.3, 1216.6 + s, 259.3, 1216.6 + s, 406.3, 1247 + s, 406.3)}
      ${[61.3, 134.3, 161, 257, 299].map((y) => tunnel(866.6 + s, y, PINK))}
      ${tunnel(866.6 + s, 144.5, TEAL)}${tunnel(866.6 + s, 178, BLUE)}${tunnel(866.6 + s, 393.3, OLIVE)}${tunnel(866.6 + s, 418.3, TEAL)}
      ${askTunnel(866.6 + s, 377)}
      ${tunnel(1376 + s, 61.3, PINK)}${tunnel(1376 + s, 134.3, PINK)}${tunnel(1376 + s, 393.3, OLIVE)}
      ${buildArray(1110.6 + s, 57.3)}
      ${box(1003.8 + s, 68.7, 1086.6 + s, 86.3, "#fff", PINK, 2)}${text(1045.5 + s, 78, "Plot Pattern(s)", "#000", "middle")}
      ${box(969.3 + s, 87.3, 1101.6 + s, 105.3, "#fff", PINK, 2)}${text(1036 + s, 97, "Update Cursor Controls", "#000", "middle")}
      ${bundle(1159 + s, 153.3, 1225.6 + s, "Patterns")}
      ${bundle(960.3 + s, 249.3, 1015.5 + s, "Name")}
      ${indexArray(911.4 + s, 171.3)}${indexArray(965.3 + s, 199.3)}${replaceArray(1047.2 + s, 153.3)}
      ${forLoop(1106.5 + s, 236.3, 1197 + s, 293.7, 1116.5 + s, 273)}
      ${wire("clu", 1114 + s, 260, 1127 + s, 260)}${wire("str", 1181 + s, 259.3, 1193 + s, 259.3)}
      ${unbundle(1126.5 + s, 251.3, 1181.7 + s, [["Name", PINK]])}
      ${autoTunnel(1106.5 + s, 260.3)}${autoTunnel(1192.6 + s, 259.5)}
      ${property_(966.6 + s, 380.3, 1021.4 + s, "Str", "Value")}
      ${property_(1246.5 + s, 380.3, 1359.7 + s, "LstBox (strict)", "ItemNames")}
      ${terminal(1396.3 + s, 53.3, PINK, "abc]", true)}${text(1429.4 + s, 61, "State Queue out")}
      ${terminal(1396.3 + s, 126.3, PINK, "", true, true)}${text(1429.4 + s, 134, "Page Data out")}
      ${terminal(1396.3 + s, 385.3, OLIVE, "", true)}${text(1429.4 + s, 393, "error out")}`;
  }

  private innerCase(s: number) {
    return svg`
      ${wire("err", 569 + s, 393.3, 867 + s, 393.3)}
      ${wire("blue", 569 + s, 369.3, 661 + s, 369.3)}
      ${wire("blue", 691 + s, 377.3, 698.5 + s, 377.3, 698.5 + s, 369.3, 718 + s, 369.3)}
      ${wire("blue", 748 + s, 377.3, 757 + s, 377.3, 757 + s, 369.3, 776 + s, 369.3)}
      ${wire("str", 569 + s, 403, 706 + s, 403, 706 + s, 377, 718 + s, 377)}
      ${wire("str", 569 + s, 355, 765.4 + s, 355, 765.4 + s, 377, 776 + s, 377)}
      ${wire("bool", 807 + s, 377.3, 867 + s, 377.3)}
      ${askTunnel(560.3 + s, 331.3)}
      ${tunnel(560.3 + s, 355, PINK)}${tunnel(560.3 + s, 369.3, BLUE)}${tunnel(560.3 + s, 393.3, OLIVE)}${tunnel(560.3 + s, 403.3, PINK)}
      ${tunnel(832.5 + s, 377.3, GREEN)}${tunnel(832.5 + s, 393.3, OLIVE)}`;
  }

  private subVis(s: number) {
    return svg`${cdev(660 + s, 365.3)}${cdev(717.2 + s, 365.3)}${cdev(775.8 + s, 365.3, true)}`;
  }

  private inputs() {
    return svg`
      ${terminal(93, 53.3, PINK, "[abc]")}${text(91, 61, "State Queue in", "#000", "end")}
      ${terminal(93, 126.3, PINK, "", false, true)}${text(91, 134, "Page Data in", "#000", "end")}
      ${terminal(93, 274.3, PINK, "abc")}${text(91, 282, "NewVal", "#000", "end")}
      ${terminal(93, 291.7, PINK, "abc")}${text(91, 299, "OldVal", "#000", "end")}
      ${terminal(93, 385.3, OLIVE, "")}${text(91, 393, "error in (no error)", "#000", "end")}
      ${unbundle(132.5, 136.3, 228.5, [["Pattern Name", TEAL], ["Patterns", PINK], ["Sel patterns", BLUE], ["Node Ptr", BLUE], ["Select Pattern", TEAL]])}`;
  }

  // Wires that run from the terminals to the two case structures.
  private trunk(s: number) {
    return svg`
      ${wire("strArr", 125, 61.3, 867 + s, 61.3)}
      ${wire("clu", 127.6, 134.3, 127.6, 179.3, 134, 179.3)}
      ${wire("clu", 125, 134.3, 867 + s, 134.3)}${dot(128, 134.3, PINK, 3)}
      ${wire("teal", 228, 144.3, 867 + s, 144.3)}
      ${wire("blueArr", 228, 178, 867 + s, 178)}`;
  }

  private before() {
    return svg`
      ${this.trunk(0)}
      ${wire("cluArr", 268, 161, 268, 219.7, 283, 219.7)}
      ${wire("cluArr", 228, 161, 867, 161)}${dot(268, 161, PINK, 3)}
      ${wire("blue", 228, 195.3, 252.6, 195.3, 252.6, 369.3, 561, 369.3)}
      ${wire("str", 232.9, 282, 232.9, 245.7, 283, 245.7)}
      ${wire("err", 125, 393.3, 561, 393.3)}
      ${wire("bool", 499, 224.3, 518.6, 224.3, 518.6, 331.3, 561, 331.3)}
      ${wire("str", 125, 282, 503.8, 282)}
      ${wire("str", 125, 299, 867, 299)}
      ${wire("str", 867, 257, 503.8, 257, 503.8, 355, 561, 355)}
      ${wire("str", 473.6, 299, 473.6, 403, 561, 403)}
      ${wire("str", 499, 202, 552.6, 202, 552.6, 318, 561, 318)}
      ${wire("teal", 228, 212.7, 241.6, 212.7, 241.6, 418.3, 867, 418.3)}
      ${dot(232.9, 282)}${dot(503.8, 282)}${dot(473.6, 299)}
      ${forLoop(282.2, 188.3, 495, 269.7, 292.7, 249, true)}
      ${wire("clu", 290, 219.7, 311, 219.7)}
      ${wire("str", 413, 202, 491, 202)}${wire("str", 413, 219, 457, 219)}
      ${wire("str", 290, 245.7, 417.7, 245.7, 417.7, 229, 457, 229)}
      ${wire("bool", 477, 224.3, 491, 224.3)}${wire("bool", 471.5, 230, 471.5, 244, 477, 244)}
      ${unbundle(310.2, 194.3, 413.3, [["FPGA Resource", PINK], ["Name", PINK]])}
      ${equal(456.6, 214.3)}${stopSign(477, 236.7)}
      ${autoTunnel(282.2, 219.7)}${tunnel(282.2, 246.5, PINK)}${tunnel(491, 202.5, PINK)}${tunnel(491, 224.3, GREEN)}
      ${caseFrame(560.3, 304.3, 840.8, 413.3, 669.4, "False")}
      ${this.innerCase(0)}
      ${wire("str", 569, 318, 600, 318)}${wire("str", 630, 318, 637, 318, 637, 377, 661, 377)}
      ${tunnel(560.3, 318.3, PINK)}
      ${subVi(599.2, 314.3, ["RIO/CH", "TO", "RIO + CH"])}
      ${this.subVis(0)}`;
  }

  private after() {
    return svg`
      ${this.trunk(409)}
      ${wire("cluArr", 570, 161, 570, 213.3, 577, 213.3)}
      ${wire("cluArr", 283.9, 161, 283.9, 231, 303, 231)}
      ${wire("cluArr", 228, 161, 1276, 161)}${dot(283.9, 161, PINK, 3)}${dot(570, 161, PINK, 3)}
      ${wire("blueArr", 234.5, 178, 234.5, 231, 250, 231)}${dot(234.5, 178, BLUE)}
      ${wire("blue", 228, 195.3, 561.4, 195.3, 561.4, 369.3, 970, 369.3)}
      ${wire("err", 125, 393.3, 970, 393.3)}
      ${wire("teal", 228, 212.7, 554.5, 212.7, 554.5, 418.3, 1276, 418.3)}
      ${wire("str", 125, 282, 930, 282)}${wire("str", 125, 299, 1276, 299)}
      ${wire("str", 522, 237, 522, 382, 970, 382)}
      ${wire("str", 515, 242, 522, 242)}${wire("str", 522, 242, 522, 237, 577, 237)}
      ${wire("str", 562, 282, 562, 250, 577, 250)}
      ${wire("bool", 919, 227.7, 963.5, 227.7, 963.5, 331.3, 970, 331.3)}
      ${wire("str", 1276, 257, 930, 257, 930, 355, 970, 355)}
      ${wire("str", 882.6, 299, 882.6, 403, 970, 403)}
      ${wire("blue", 279, 244.3, 303, 244.3)}${wire("clu", 333, 244.3, 347, 244.3)}
      ${wire("str", 449, 242, 485, 242)}
      ${dot(522, 242)}${dot(562, 282)}${dot(930, 282)}${dot(882.6, 299)}
      ${indexArray(248.9, 222.3)}${indexArray(302.6, 222.3)}
      ${unbundle(346.4, 235.3, 449.5, [["FPGA Resource", PINK]])}
      ${subVi(484.5, 238.3, ["RIO/CH", "TO", "RIO + CH"])}
      ${forLoop(576.4, 192.3, 915.8, 273.7, 586.4, 253, true)}
      ${wire("clu", 584, 213.3, 602, 213.3)}
      ${wire("str", 704, 204, 725, 204)}${wire("str", 755, 203, 777, 203)}
      ${wire("str", 584, 250, 806, 250)}
      ${wire("str", 704, 221, 710.8, 221, 710.8, 240, 806, 240)}
      ${wire("str", 584, 237, 591.4, 237, 591.4, 244.7, 759.5, 244.7, 759.5, 213, 777, 213)}
      ${wire("bool", 796, 208.7, 827.6, 208.7, 827.6, 216.3, 834, 216.3)}
      ${wire("bool", 826, 245.3, 826.5, 224.3, 834, 224.3)}
      ${wire("bool", 856, 220, 863.3, 220, 863.3, 245.7, 871, 245.7)}
      ${wire("bool", 863.3, 227.7, 912, 227.7)}${dot(863.3, 227.7, GREEN, 2)}
      ${unbundle(600.8, 196.3, 704.5, [["FPGA Resource", PINK], ["Name", PINK]])}
      ${subVi(724.5, 199.3, ["RIO/CH", "TO", "RIO + CH"])}
      ${equal(776.4, 198.3)}${equal(805.8, 235.3)}${andGate(833.3, 212.3)}${stopSign(870.8, 240.3)}
      ${autoTunnel(576.4, 213.3)}${tunnel(576.4, 237, PINK)}${tunnel(576.4, 250.3, PINK)}${tunnel(911.4, 227.7, GREEN)}
      ${caseFrame(969.3, 304.3, 1249.8, 413.3, 1078.4, "False")}
      ${this.innerCase(409)}
      ${wire("str", 978, 382, 1062.6, 382, 1062.6, 377, 1070, 377)}
      ${tunnel(969.3, 382, PINK)}
      ${this.subVis(409)}
      ${wire("bool", 1256.9, 377.3, 1256.9, 477.3, 1808, 477.3)}${dot(1257, 377.3, GREEN, 2)}
      ${terminal(1807.6, 469.3, GREEN, "TF", true)}${text(1808.3, 461, "name collision?")}`;
  }

  private trueCases(dy: number) {
    const Y = (v: number) => v + dy;
    return svg`
      ${caseFrame(-0.8, Y(482), 518.1, Y(887.7), 227.4, "True")}
      ${wire("strArr", 8, Y(517.6), 510, Y(517.6))}${wire("clu", 8, Y(590.3), 510, Y(590.3))}
      ${wire("teal", 8, Y(600.6), 199.6, Y(600.6), 199.6, Y(824.4), 283, Y(824.4))}
      ${wire("str", 8, Y(755.2), 148.2, Y(755.2), 148.2, Y(845.8), 283, Y(845.8))}
      ${wire("err", 8, Y(849.3), 145.6, Y(849.3), 145.6, Y(833.5), 422.7, Y(833.5), 422.7, Y(849.3), 510, Y(849.3))}
      ${[517.6, 590.3, 617.2, 713.3, 755.2].map((y) => tunnel(-0.8, Y(y), PINK))}
      ${tunnel(-0.8, Y(600.6), TEAL)}${tunnel(-0.8, Y(634.6), BLUE)}${askTunnel(-0.8, Y(833.1))}${tunnel(-0.8, Y(849.3), OLIVE)}${tunnel(-0.8, Y(874.2), TEAL)}
      ${tunnel(509.7, Y(517.6), PINK)}${tunnel(509.7, Y(590.3), PINK)}${tunnel(509.7, Y(849.3), OLIVE)}
      ${property_(282.5, Y(820.5), 337.6, "Str", "Value")}
      ${caseFrame(-0.8, Y(938.3), 279.5, Y(1047.4), 108.3, "True")}
      ${wire("bool", 8, Y(965.2), 32.4, Y(965.2), 32.4, Y(1011.4), 272, Y(1011.4))}
      ${wire("err", 8, Y(1027.3), 272, Y(1027.3))}
      ${this.collision ? nothing : tunnel(-0.8, Y(952.5), PINK)}
      ${askTunnel(-0.8, Y(965.2))}${tunnel(-0.8, Y(989.3), PINK)}${tunnel(-0.8, Y(1003.1), BLUE)}
      ${this.collision ? tunnel(-0.8, Y(1016), PINK) : nothing}
      ${tunnel(-0.8, Y(1027.3), OLIVE)}${tunnel(-0.8, Y(1037.5), PINK)}
      ${tunnel(271.1, Y(1011.4), GREEN)}${tunnel(271.1, Y(1027.3), OLIVE)}`;
  }

  render() {
    const s = this.collision ? 409 : 0;
    return html`<svg role="img" aria-label="Block diagram">
      <defs><pattern id="hatch" width="2" height="2" patternUnits="userSpaceOnUse"><rect width="2" height="2" fill="#fff"></rect><rect width="1" height="1" fill="#000"></rect><rect x="1" y="1" width="1" height="1" fill="#000"></rect></pattern></defs>
      ${caseFrame(866.6 + s, 26.3, 1384.6 + s, 431.3, 1094.3 + s, "False")}
      ${this.collision ? this.after() : this.before()}
      ${this.outerCase(s)}
      ${this.inputs()}
      ${this.trueCases(this.collision ? 52 : 0)}
    </svg>`;
  }
}

/* ---------- page ---------- */

const BD_ITEMS = [
  "And  Added at (1042,1101)",
  "Equal?  Added at (985,1087)",
  "Front Panel Terminal name collision? Added at (2016,1358)",
  "Index Array  Added at (457,1111)",
  "Index Array  Added at (511,1111)",
  "SubVI Engine Simulation Toolkit System Explorer.lvlib:Get RIO and Channel Strings.vi Added at (693,1127)",
  "Unbundle By Name  Added at (555,1124)",
];

// Each row is an indent level and its text.
const REPORT: [number, string][][] = [
  [[0, "Differences:"], [0, "Front Panel Functional Changes"], [1, "Added"], [2, "Boolean name collision? Added at (276,115)"], [1, "control/indicator assignment"], [2, "Connector Pane  Changed."]],
  [[0, "Front Panel Cosmetic Changes"], [1, "None"]],
  [[0, "Block Diagram Functional Changes"], [1, "Added"], ...BD_ITEMS.map((t): [number, string] => [2, t]), [1, "wiring changes"]],
  [[0, "Block Diagram Cosmetic Changes"], [1, "Added"], ...BD_ITEMS.map((t): [number, string] => [2, t]), [1, "wiring changes"]],
  [[0, "Attribute Changes"], [1, "VI Version"], [3, 'Changed from "15.0" to "18.0".']],
];

const VI = "Engine Simulation Toolkit System Explorer.lvlib:Rename Digital Pattern - Multi FPGA.vi";

@customElement("app-root")
export class AppRoot extends LitElement {
  static styles = css`
    :host { display: block; background: #fff; color: #000; font-family: "Open Sans", "Noto Sans", sans-serif; }
    .pair { display: grid; grid-template-columns: 1216fr 1514fr; padding: 20px 0 0 20px; }
    .version { min-width: 0; }
    h2 { margin: 0; width: max-content; height: 16px; line-height: 18px; font-size: 15px; font-weight: 400; font-style: italic; overflow: hidden; border-bottom: 2px solid #000; white-space: nowrap; }
    .panel { display: block; margin-bottom: 40px; }
    .report { display: flex; flex-direction: column; gap: 14px; font-size: 9px; line-height: 13px; padding-bottom: 26px; }
    .report p { margin: 0; white-space: pre; }
    .l1 { padding-left: 12px; }
    .l2 { padding-left: 23px; }
    .l3 { padding-left: 28px; }
  `;

  private version(after: boolean) {
    return html`<section class="version">
      <h2>${VI} Front Panel</h2>
      <vi-front-panel class="panel" ?collision=${after}></vi-front-panel>
      <h2>${VI} Connector Pane</h2>
      <vi-connector-pane ?collision=${after}></vi-connector-pane>
      <h2>${VI} Block Diagram</h2>
      <vi-block-diagram ?collision=${after}></vi-block-diagram>
    </section>`;
  }

  render() {
    return html`<div class="pair">${this.version(false)}${this.version(true)}</div>
      <div class="report">
        ${REPORT.map((group) => html`<section>${group.map(([lvl, t]) => html`<p class="l${lvl}">${t}</p>`)}</section>`)}
      </div>`;
  }
}
